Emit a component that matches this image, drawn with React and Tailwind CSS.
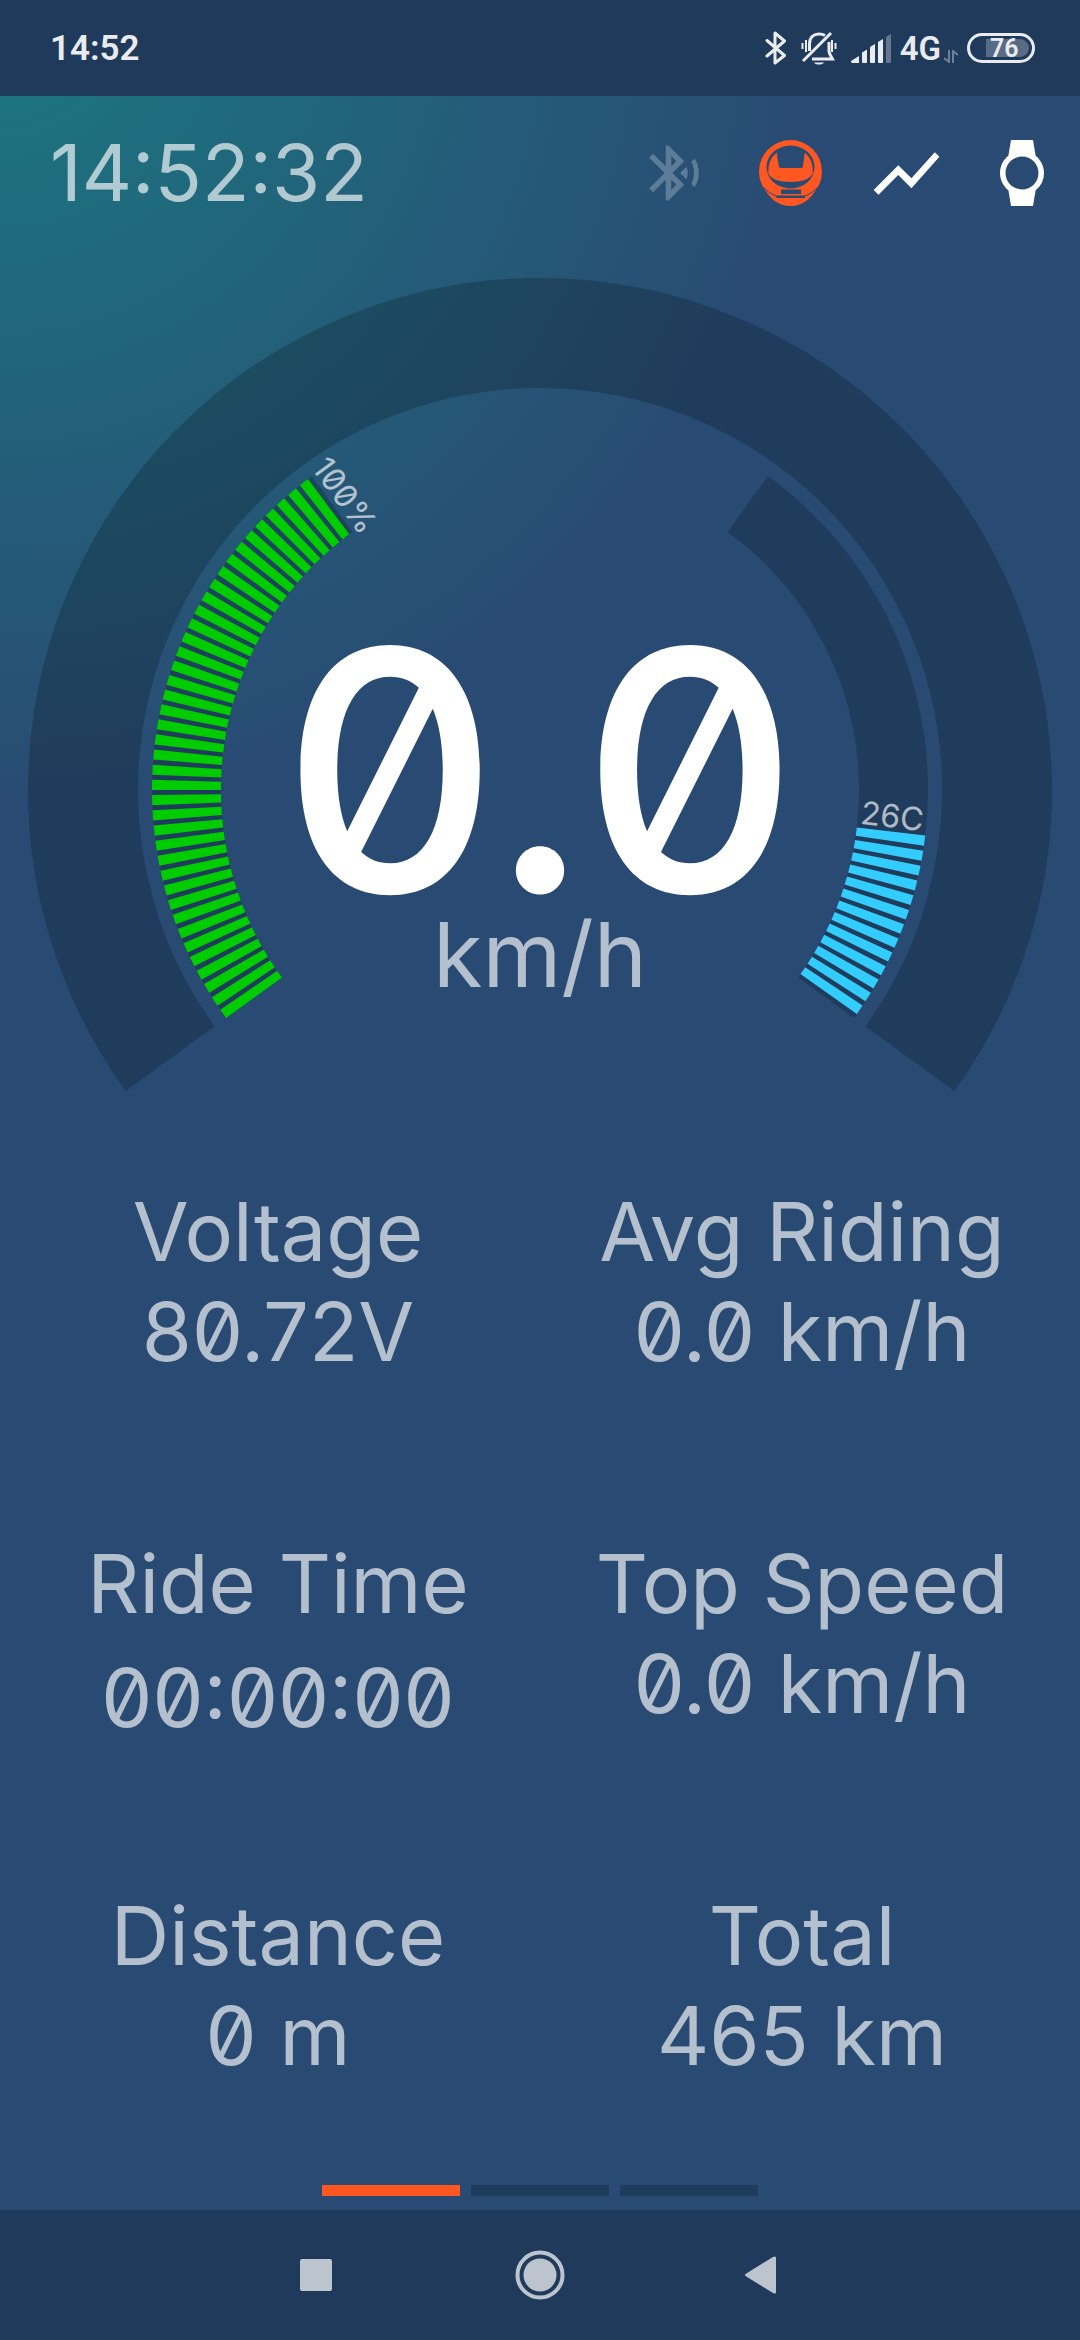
import React, { useState } from "react";
import { MdBluetoothSearching, MdShowChart, MdWatch } from "react-icons/md";

const stats = [
  { label: "Voltage", value: "80.72V" },
  { label: "Avg Riding", value: "0.0 km/h" },
  { label: "Ride Time", value: "00:00:00", timer: true },
  { label: "Top Speed", value: "0.0 km/h" },
  { label: "Distance", value: "0 m" },
  { label: "Total", value: "465 km" },
];

// dial center and helpers, angles in degrees, clockwise from 3 o'clock
const CX = 540;
const CY = 544;

function arc(radius, from, to) {
  const point = (deg) => {
    const rad = (deg * Math.PI) / 180;
    return `${CX + radius * Math.cos(rad)} ${CY + radius * Math.sin(rad)}`;
  };
  const large = to - from > 180 ? 1 : 0;
  return `M${point(from)}A${radius} ${radius} 0 ${large} 1 ${point(to)}`;
}

const StatusBar = () => {
  return (
    <div className="h-24 shrink-0 bg-[#203a5b] pl-[50px] pr-[45px] flex items-center justify-between text-[#e9ebee] font-[Roboto,sans-serif]">
      <span className="text-[35px] leading-none font-semibold">14:52</span>
      <div className="flex items-center">
        <svg className="w-[22px] h-[34px]" viewBox="0 0 22 34" fill="none" stroke="currentColor" strokeWidth="3" strokeLinejoin="round" strokeLinecap="round">
          <path d="M2 9.500L19.500 24.500L10 32V2L19.500 10L2 25" />
        </svg>
        <svg className="w-[36px] h-[34px] ml-[14px]" viewBox="0 0 36 34" fill="none" stroke="currentColor" strokeWidth="2.500">
          <path d="M2 30L30 2" strokeWidth="3" />
          <path d="M8.500 20V13C8.500 6 13 3 18 3C20.500 3 22.500 3.500 24 4.500" strokeWidth="3" />
          <path d="M28 11V20C28 23 30 25 31.500 28H11" strokeWidth="3" />
          <path d="M13 31.500H23C22 33 20.500 33.500 18 33.500S14 33 13 31.500Z" fill="currentColor" stroke="none" />
          <path d="M1.500 12V18M5 9V21M31 9V21M34.500 12V18" strokeWidth="2" />
        </svg>
        <svg className="w-[41px] h-[29px] ml-[14px]" viewBox="0 0 41 29" fill="currentColor">
          <path d="M0 27L8 22V29H1Q0 29 0 27Z" />
          <path d="M11 18.500L16 15.500V28Q16 29 15 29H12Q11 29 11 28Z" />
          <path d="M19 13L24 10V28Q24 29 23 29H20Q19 29 19 28Z" />
          <path d="M27 8L32 5V28Q32 29 31 29H28Q27 29 27 28Z" />
          <path d="M35 3L40 0V28Q40 29 39 29H36Q35 29 35 28Z" opacity=".35" />
        </svg>
        <span className="text-[33px] leading-none font-semibold ml-2">4G</span>
        <svg className="w-[14px] h-[13px] ml-[3px] mt-4" viewBox="0 0 14 13" fill="none" stroke="currentColor" strokeWidth="2" opacity=".4">
          <path d="M5 0V12L0 8M9 13V1L14 5" />
        </svg>
        <div className="w-[68px] h-[30px] ml-[9px] rounded-full border-[3px] border-current flex items-center justify-end pr-[3px]">
          <div className="w-[43px] h-[18px] rounded-l-xs rounded-r-full bg-white/25 pl-1 flex items-center">
            <span className="text-[25px] leading-none font-semibold">76</span>
          </div>
        </div>
      </div>
    </div>
  );
};

const WheelIcon = () => {
  return (
    <svg className="w-[63px] h-[66px]" viewBox="0 0 63 66">
      <path d="M5 46C9 58 19 66 31.500 66S54 58 58 46Z" fill="#ff5722" />
      <circle cx="31.500" cy="31.500" r="31.500" fill="#ff5722" />
      <ellipse cx="31.500" cy="27" rx="24" ry="21.500" fill="#294b73" />
      <path
        d="M17.700 12.500L19.700 26Q20 28 22 28H42Q43.800 28 44 26L45.800 12.500Q54.500 20 53.800 33.500Q49 42 31.500 42Q14 42 9.300 33.500Q8.500 20 17.700 12.500Z"
        fill="#ff5722"
      />
      <path d="M22 49.500H42V54H22ZM17.500 55.500H46V58H17.500Z" fill="#294b73" />
      <path d="M4.500 47.500Q10 53.500 18 56.500M58.500 47.500Q53 53.500 45 56.500" fill="none" stroke="#294b73" />
    </svg>
  );
};

const Header = () => {
  return (
    <header className="h-[150px] shrink-0 pl-[50px] pt-1 flex items-center justify-between">
      <time className="text-[78px] leading-none text-white/65">14:52:32</time>
      <div className="flex">
        <button aria-label="Scan for wheel" className="w-[116px] h-[116px] flex items-center justify-center text-white/25">
          <MdBluetoothSearching className="size-[66px]" />
        </button>
        <button aria-label="Wheel" className="w-[116px] h-[116px] flex items-center justify-center">
          <WheelIcon />
        </button>
        <button aria-label="Graph" className="w-[116px] h-[116px] flex items-center justify-center text-white">
          <MdShowChart className="size-[79px]" />
        </button>
        <button aria-label="Watch" className="w-[116px] h-[116px] flex items-center justify-center text-white">
          <MdWatch className="size-[66px]" />
        </button>
      </div>
    </header>
  );
};

const Dial = () => {
  return (
    <section className="grid">
      <svg className="w-full [grid-area:1/1]" viewBox="0 0 1080 870" fill="none">
        <g stroke="#000" strokeOpacity=".2">
          <path d={arc(457, 144, 396)} strokeWidth="110" />
          <path d={arc(353.5, 144, 234)} strokeWidth="69" />
          <path d={arc(353.5, -54, 36)} strokeWidth="69" />
        </g>
        {/* battery: 40 bars, all lit */}
        <path d={arc(353.5, 144, 234)} stroke="#00cc00" strokeWidth="69" pathLength="90" strokeDasharray="1.5 0.75" />
        {/* temperature: 13 of 40 bars */}
        <path d={arc(353.5, 6.75, 36)} stroke="#33ccff" strokeWidth="69" pathLength="29.25" strokeDasharray="1.5 0.75" />
        <g className="text-[32px] slashed-zero fill-white/65">
          <text transform={`rotate(54 ${CX} ${CY})`} x="187" y="540" textAnchor="middle">100%</text>
          <text transform={`rotate(6.75 ${CX} ${CY})`} x="893" y="540" textAnchor="middle">26C</text>
        </g>
      </svg>
      <div className="[grid-area:1/1] flex flex-col items-center pt-[369px]">
        <p className="text-[335px] leading-[310px] font-medium text-white">0.0</p>
        <p className="text-[90px] leading-[60px] text-white/65">km/h</p>
      </div>
    </section>
  );
};

const Stat = ({ label, value, timer }) => {
  return (
    <div className="h-[214px] flex flex-col items-center text-[81px] leading-[100px] whitespace-nowrap">
      <dt>{label}</dt>
      <dd className={timer ? "pt-[14px]" : ""}>{value}</dd>
    </div>
  );
};

const App = () => {
  const [page, setPage] = useState(0);

  return (
    <div className="min-h-screen flex flex-col bg-[#294b73] bg-[radial-gradient(circle_800px_at_0_0,#1b7881,#294b73)] font-[Inter,sans-serif] slashed-zero">
      <StatusBar />
      <Header />
      <Dial />
      <dl className="grid grid-cols-2 gap-y-[138px] px-4 pt-[66px] text-white/65">
        {stats.map((stat) => (
          <Stat key={stat.label} {...stat} />
        ))}
      </dl>
      <div className="mt-auto pb-[14px] flex justify-center gap-[11px]">
        {[0, 1, 2].map((n) => (
          <button
            key={n}
            aria-label={`Page ${n + 1}`}
            onClick={() => setPage(n)}
            className={`w-[138px] h-[11px] ${n === page ? "bg-[#ff5722]" : "bg-black/20"}`}
          />
        ))}
      </div>
      <nav className="h-[130px] shrink-0 bg-[#203a5b] flex justify-center text-[#bcc4ce]">
        <button aria-label="Recents" className="w-56 flex items-center justify-center">
          <svg className="size-[50px]" viewBox="0 0 50 50" fill="currentColor">
            <rect x="9" y="9" width="32" height="32" rx="2" />
          </svg>
        </button>
        <button aria-label="Home" className="w-56 flex items-center justify-center">
          <svg className="size-[50px]" viewBox="0 0 50 50" fill="currentColor">
            <circle cx="25" cy="25" r="16.500" />
            <circle cx="25" cy="25" r="22.500" fill="none" stroke="currentColor" strokeWidth="4" />
          </svg>
        </button>
        <button aria-label="Back" className="w-56 flex items-center justify-center">
          <svg className="size-[50px]" viewBox="0 0 50 50" fill="currentColor">
            <path d="M6.500 24Q5.500 25 6.500 26L34 43Q37 44.500 37 42V8Q37 5.500 34 7Z" />
          </svg>
        </button>
      </nav>
    </div>
  );
};

export default App;
